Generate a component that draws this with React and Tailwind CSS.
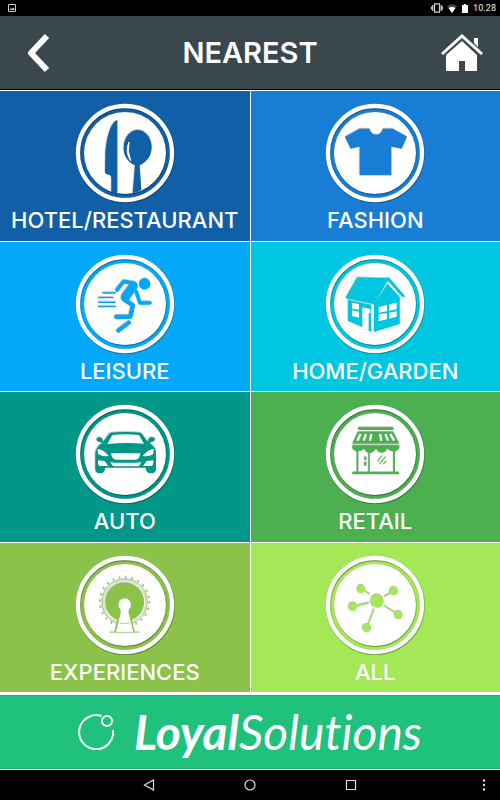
import React from "react";

// Drawings of the categories, all on the same 300x300 board as the badge
const Restaurant = () => (
  <g>
    <path d="M144 78 C124 84 111 130 108 180 L107 234 Q107 239 113 240 L122 243 Q126 245 126 252 V292 Q135 297 144 297 Z" />
    <path d="M204 107 C182 107 163 132 163 161 C163 188 179 205 197 213 L190 297 Q204 295 216 287 L211 213 C233 203 247 184 247 158 C247 130 228 107 204 107 Z" />
    <path
      d="M179 143 Q166 172 184 199 Q173 171 179 143 Z"
      fill="white"
      stroke="white"
      strokeWidth="3"
      strokeLinejoin="round"
    />
  </g>
);

const Shirt = () => (
  <path d="M121 103 H150 Q156 121 171 121 Q186 121 191 103 H220 L263 127 L247 163 L216 157 V243 H121 V157 L94 163 L77 128 Z" />
);

const Runner = () => (
  <g stroke="currentColor" fill="none" strokeLinecap="round" strokeLinejoin="round">
    <circle cx="226" cy="116" r="17" fill="currentColor" stroke="none" />
    <path d="M101 143 H138 M88 157 H131 M88 171 H138 M88 184 H138" strokeWidth="4" />
    <path d="M143 134 L163 109 L192 113" strokeWidth="11" />
    <path d="M192 122 L168 156" strokeWidth="27" />
    <path d="M201 140 L212 173 H242" strokeWidth="11" />
    <path d="M166 164 L191 180 L183 214 L141 215" strokeWidth="13" />
    <path d="M179 232 L147 256" strokeWidth="12" />
  </g>
);

const House = () => (
  <g>
    <path
      d="M115 99 L205 101 L164 174 L82 157 Z"
      stroke="currentColor"
      strokeWidth="5"
      strokeLinejoin="round"
    />
    <path d="M201 97 L210 98 L258 154 H248 L207 108 L203 109 Z" />
    <path d="M86 164 L155 179 V259 L129 245 L86 227 Z" />
    <path d="M164 178 L205 116 L241 156 V236 L164 260 Z" />
    <g fill="white">
      <path d="M98 172 L119 177 V193 L98 190 Z" />
      <path d="M98 195 L119 199 V217 L98 212 Z" />
      <path d="M129 186 L153 191 V204 L148 203 V254 L129 247 Z" />
      <path d="M178 185 L203 179 V198 L178 202 Z" />
      <path d="M209 177 L232 172 V192 L209 196 Z" />
      <path d="M178 207 L203 203 V222 L178 228 Z" />
      <path d="M209 202 L232 198 V214 L209 220 Z" />
    </g>
  </g>
);

const Car = () => (
  <g>
    <path d="M125 112 Q168 108 213 112 Q219 114 235 140 Q238 126 247 126 Q257 126 257 134 Q254 139 240 142 Q260 156 260 172 V220 Q260 234 244 234 Q231 234 229 217 H108 Q106 234 93 234 Q78 234 78 220 V172 Q80 155 100 142 Q84 140 81 133 Q83 126 92 126 Q99 127 102 140 Q118 114 125 112 Z" />
    <g fill="white">
      <path d="M129 119 Q168 115 209 119 L224 145 Q168 141 114 146 Z" />
      <path d="M84 161 Q101 161 118 182 Q101 185 87 177 Z" />
      <path d="M254 161 Q237 161 220 182 Q237 185 251 177 Z" />
      <path d="M125 174 H213 Q211 191 200 193 H138 Q128 191 125 174 Z" />
      <path d="M86 195 L106 197 L117 212 H91 Q85 209 86 195 Z" />
      <path d="M252 195 L232 197 L221 212 H247 Q253 209 252 195 Z" />
      <path d="M124 200 Q132 202 137 202 H201 Q207 202 215 199 Q213 213 203 213 H136 Q127 212 124 200 Z" />
    </g>
  </g>
);

const Shop = () => (
  <g>
    <path d="M117 96 H222 V104 H117 Z" />
    <path d="M116 109 H222 L240 145 H99 Z" />
    <path d="M99 150 H240 V158 Q234 168 224 168 Q211 168 205 160 Q197 172 187 172 Q176 172 170 160 Q161 173 151 173 Q140 173 135 160 Q127 168 117 168 Q103 168 99 158 Z" />
    <path
      d="M124 116 L114 136 M140 116 L133 136 M156 116 L152 136 M182 116 L186 136 M198 116 L206 136 M213 116 L224 136"
      stroke="white"
      strokeWidth="7"
    />
    <path d="M112 163 H117 V231 H112 Z M147 166 H151 V231 H147 Z M222 163 H227 V231 H222 Z M99 230 H239 V237 H99 Z M135 184 H141 V195 H135 Z M135 200 H141 V211 H135 Z" />
    <path d="M175 199 L188 181 M181 206 L199 184 M192 207 L201 197" stroke="currentColor" strokeWidth="3" />
  </g>
);

const Wheel = () => (
  <g>
    <circle cx="166" cy="167" r="58" />
    <circle cx="166" cy="167" r="63" fill="none" stroke="currentColor" strokeWidth="1" />
    <circle cx="166" cy="167" r="68" fill="none" stroke="currentColor" strokeWidth="2" />
    <circle cx="166" cy="167" r="74" fill="none" stroke="currentColor" strokeWidth="5" strokeDasharray="4 15.37" />
    <path d="M155 190 H177 L195 257 H137 Z" fill="white" />
    <circle cx="166" cy="175" r="19" fill="white" />
    <path d="M153 196 L138 257 M179 196 L194 257" stroke="currentColor" strokeWidth="4" />
    <path d="M148 229 Q166 236 184 229 M121 258 H210" fill="none" stroke="currentColor" strokeWidth="2" />
  </g>
);

const Network = () => (
  <g>
    <path
      d="M136 134 L151 144 M195 151 L213 141 M113 179 L149 170 M195 179 L226 198 M164 189 L147 234"
      stroke="currentColor"
      strokeWidth="4"
    />
    <circle cx="173" cy="164" r="20" />
    <circle cx="125" cy="128" r="13" />
    <circle cx="223" cy="134" r="13" />
    <circle cx="100" cy="181" r="13" />
    <circle cx="237" cy="206" r="13" />
    <circle cx="142" cy="245" r="13" />
  </g>
);

const categories = [
  { name: "HOTEL/RESTAURANT", Icon: Restaurant, bg: "bg-[#115fa6]", color: "text-[#115fa6]" },
  { name: "FASHION", Icon: Shirt, bg: "bg-[#177dd5]", color: "text-[#177dd5]" },
  { name: "LEISURE", Icon: Runner, bg: "bg-[#03a9f8]", color: "text-[#03a9f8]" },
  { name: "HOME/GARDEN", Icon: House, bg: "bg-[#00c7e1]", color: "text-[#00c7e1]" },
  { name: "AUTO", Icon: Car, bg: "bg-[#009688]", color: "text-[#009688]" },
  { name: "RETAIL", Icon: Shop, bg: "bg-[#4caf50]", color: "text-[#4caf50]" },
  { name: "EXPERIENCES", Icon: Wheel, bg: "bg-[#8bc34a]", color: "text-[#8bc34a]" },
  { name: "ALL", Icon: Network, bg: "bg-[#a4e757]", color: "text-[#a4e757]" },
];

const Badge = ({ Icon, color }) => (
  <svg width="100" height="100" viewBox="17 26 300 300" className={color} fill="currentColor" aria-hidden="true">
    <g className="[filter:drop-shadow(1px_2px_1px_rgba(0,0,0,0.5))]">
      <circle cx="167" cy="176" r="141" fill="none" stroke="white" strokeWidth="13" />
      <circle cx="167" cy="176" r="123" fill="white" />
    </g>
    <g className="[filter:drop-shadow(-1px_-2px_0px_rgba(0,0,0,0.35))]">
      <Icon />
    </g>
  </svg>
);

const StatusBar = () => (
  <div className="flex h-4 items-center justify-between bg-black pr-1 pl-2 text-[#cccccc]">
    <svg width="8" height="8" viewBox="0 0 8 8" aria-hidden="true">
      <path d="M.5 .5 H7.5 V7.5 H.5 Z" fill="none" stroke="currentColor" />
      <path d="M1.500 6 L3 4 L4 5 L5.500 3.500 L7 6 Z" fill="currentColor" />
    </svg>
    <div className="flex items-center gap-1">
      <svg width="12" height="10" viewBox="0 0 12 10" fill="none" stroke="currentColor" aria-hidden="true">
        <path d="M3.500 .8 H8.500 V9.200 H3.500 Z M1.800 2 V8 M10.200 2 V8 M.5 3.500 V6.500 M11.500 3.500 V6.500" strokeWidth="1.200" />
      </svg>
      <svg width="10" height="9" viewBox="0 0 10 9" fill="currentColor" aria-hidden="true">
        <path d="M0 2 Q5 -1.500 10 2 L5 9 Z" opacity=".35" />
        <path d="M1.500 4 Q5 2 8.500 4 L5 9 Z" fill="white" />
      </svg>
      <svg width="8" height="9" viewBox="0 0 8 9" fill="white" aria-hidden="true">
        <path d="M3 0 H5 V1 H7 V9 H1 V1 H3 Z" />
      </svg>
      <span className="font-[Roboto,sans-serif] text-[9px] leading-4 font-medium">10.28</span>
    </div>
  </div>
);

const Header = () => (
  <header className="flex h-[74px] items-center justify-between border-b border-black bg-[#3a474c] px-4">
    <button aria-label="Back" className="flex w-11 justify-center">
      <svg width="24" height="40" viewBox="0 0 24 40" fill="none" stroke="white" strokeWidth="6" aria-hidden="true">
        <path d="M21 3 L5 20 L21 37" strokeLinejoin="round" />
      </svg>
    </button>
    <h1 className="text-[29px] leading-9 font-semibold text-white">NEAREST</h1>
    <button aria-label="Home" className="flex w-11 justify-center">
      <svg width="44" height="40" viewBox="0 0 44 40" fill="white" aria-hidden="true">
        <path d="M22 1 L43 20 L41 22 L22 5 L3 22 L1 20 Z" />
        <path d="M34 5 H38 V14 L34 10 Z" />
        <path d="M22 8 L37 22 V38 H25 V28 H19 V38 H6 V22 Z" />
      </svg>
    </button>
  </header>
);

const NavBar = () => (
  <nav className="grid h-[30px] grid-cols-[1fr_24px_77px_24px_77px_24px_1fr] items-center bg-black text-[#e0e0e0]">
    <button aria-label="Back" className="col-start-2 flex justify-center">
      <svg width="12" height="12" viewBox="0 0 12 12" fill="none" stroke="currentColor" aria-hidden="true">
        <path d="M10.500 1 V11 L1.500 6 Z" strokeWidth="1.200" />
      </svg>
    </button>
    <button aria-label="Home" className="col-start-4 flex justify-center">
      <svg width="12" height="12" viewBox="0 0 12 12" fill="none" stroke="currentColor" aria-hidden="true">
        <circle cx="6" cy="6" r="5" strokeWidth="1.200" />
      </svg>
    </button>
    <button aria-label="Recent apps" className="col-start-6 flex justify-center">
      <svg width="12" height="12" viewBox="0 0 12 12" fill="none" stroke="currentColor" aria-hidden="true">
        <path d="M1.500 1.500 H10.500 V10.500 H1.500 Z" strokeWidth="1.200" />
      </svg>
    </button>
    <button aria-label="More" className="col-start-7 justify-self-end px-3">
      <svg width="8" height="12" viewBox="0 0 8 12" fill="currentColor" aria-hidden="true">
        <circle cx="4" cy="1.500" r="1.200" />
        <circle cx="4" cy="6" r="1.200" />
        <circle cx="4" cy="10.500" r="1.200" />
      </svg>
    </button>
  </nav>
);

const App = () => {
  return (
    <div className="flex min-h-screen flex-col bg-white font-[Inter,sans-serif]">
      <StatusBar />
      <Header />
      <main className="mt-px grid flex-1 grid-cols-2 grid-rows-4 gap-px">
        {categories.map(({ name, Icon, bg, color }) => (
          <button key={name} className={`flex flex-col items-center pt-3 text-white ${bg}`}>
            <Badge Icon={Icon} color={color} />
            <span className="mt-1 text-[22px] leading-[26px] font-medium">{name}</span>
          </button>
        ))}
      </main>
      {/* Brand banner */}
      <footer className="mt-[3px] mb-px flex h-[74px] items-center justify-center gap-5 border-y border-[#12b66f] bg-[#20c17d] text-white">
        <svg width="36" height="36" viewBox="0 0 36 36" fill="none" stroke="currentColor" strokeWidth="2" aria-hidden="true">
          <path d="M23.500 2 A17 17 0 1 0 35 16" />
          <circle cx="29" cy="7" r="5" />
        </svg>
        <p className="font-[Lato,sans-serif] text-[48px] leading-[56px] font-normal italic [font-variant-ligatures:none]">
          <span className="font-bold">Loyal</span>Solutions
        </p>
      </footer>
      <NavBar />
    </div>
  );
};

export default App;
